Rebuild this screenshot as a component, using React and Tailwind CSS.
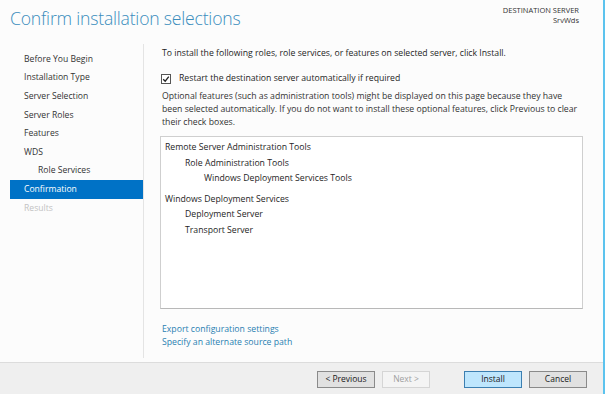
import React from 'react';

const steps = [
  { label: 'Before You Begin' },
  { label: 'Installation Type' },
  { label: 'Server Selection' },
  { label: 'Server Roles' },
  { label: 'Features' },
  { label: 'WDS' },
  { label: 'Role Services', indent: true },
  { label: 'Confirmation', active: true },
  { label: 'Results', disabled: true },
];

const items = [
  { label: 'Remote Server Administration Tools', level: 0 },
  { label: 'Role Administration Tools', level: 1 },
  { label: 'Windows Deployment Services Tools', level: 2 },
  { label: 'Windows Deployment Services', level: 0, gap: true },
  { label: 'Deployment Server', level: 1 },
  { label: 'Transport Server', level: 1 },
];

function Btn({ children, primary, disabled, className = '' }) {
  return (
    <button
      className={
        'h-[17px] border text-[8.5px] leading-none ' +
        (primary
          ? 'bg-[#bee6fd] border-[#3c7fb1] text-[#1a1a1a] '
          : disabled
          ? 'bg-[#f4f4f4] border-[#d5d5d5] text-[#a0a0a0] '
          : 'bg-[#e1e1e1] border-[#8a8a8a] text-[#1a1a1a] ') +
        className
      }
    >
      {children}
    </button>
  );
}

export default function App() {
  return (
    <div className="w-[605px] h-[394px] flex bg-[#fcfcfc] font-['Open_Sans',sans-serif] text-[#1e1e1e] overflow-hidden">
      <div className="flex-1 flex flex-col">
        {/* header */}
        <div className="h-[44px] flex justify-between pl-[10px] pr-[24px]">
          <h1 className="text-[17.6px] font-light text-[#3a8dbd] pt-[5px] leading-[26px] tracking-[-0.2px]">
            Confirm installation selections
          </h1>
          <div className="pt-[5px] text-right text-[7.5px] leading-[10px] text-[#333]">
            <div>DESTINATION SERVER</div>
            <div>SrvWds</div>
          </div>
        </div>

        {/* body */}
        <div className="flex-1 flex">
          <div className="w-[144px] pl-[10px] pt-[6px] border-r border-[#e4e4e4] mb-[4px]">
            {steps.map((s) => (
              <div
                key={s.label}
                className={
                  'h-[18.6px] flex items-center text-[8.6px] ' +
                  (s.indent ? 'pl-[28px] ' : 'pl-[14px] ') +
                  (s.active
                    ? 'bg-[#0072c6] text-white '
                    : s.disabled
                    ? 'text-[#c2c2c2] '
                    : 'text-[#333] ')
                }
              >
                {s.label}
              </div>
            ))}
          </div>

          <div className="flex-1 pl-[16px] pr-[20px] pt-[2px] text-[8.7px]">
            <p className="pl-[2px] leading-[14px]">
              To install the following roles, role services, or features on selected server, click Install.
            </p>
            <div className="flex items-center mt-[13px] h-[12px]">
              <div className="w-[10px] h-[10px] border border-[#555] bg-white flex items-center justify-center mr-[8px] ml-[1px]">
                <svg width="8" height="8" viewBox="0 0 8 8">
                  <path d="M1.2 4.2 L3.2 6.2 L6.8 1.6" fill="none" stroke="#222" strokeWidth="1.3" />
                </svg>
              </div>
              <span>Restart the destination server automatically if required</span>
            </div>
            <p className="pl-[2px] mt-[5px] leading-[13px] text-[#333]">
              Optional features (such as administration tools) might be displayed on this page because they have
              been selected automatically. If you do not want to install these optional features, click Previous to clear
              their check boxes.
            </p>

            <div className="mt-[7px] h-[173px] border border-[#cfcfcf] border-b-[#b8b8b8] bg-white pt-[3px] pl-[4px]">
              {items.map((it) => (
                <div
                  key={it.label}
                  className={
                    'h-[15.5px] flex items-center ' +
                    (it.level === 2 ? 'pl-[39px] ' : it.level === 1 ? 'pl-[20px] ' : '') +
                    (it.gap ? 'mt-[5px] ' : '')
                  }
                >
                  {it.label}
                </div>
              ))}
            </div>

            <div className="mt-[14px] pl-[2px] text-[#2a7fb2] leading-[13px]">
              <div>Export configuration settings</div>
              <div>Specify an alternate source path</div>
            </div>
          </div>
        </div>

        {/* footer */}
        <div className="h-[32px] bg-[#efefef] border-t border-[#dcdcdc] flex items-center pl-[317px] pt-[1px]">
          <Btn className="w-[58px]">&lt; Previous</Btn>
          <Btn disabled className="w-[48px] ml-[7px]">Next &gt;</Btn>
          <Btn primary className="w-[58px] ml-[34px]">Install</Btn>
          <Btn className="w-[58px] ml-[7px]">Cancel</Btn>
        </div>
      </div>
      <div className="w-[2px] bg-[#5cc3ee]" />
    </div>
  );
}
